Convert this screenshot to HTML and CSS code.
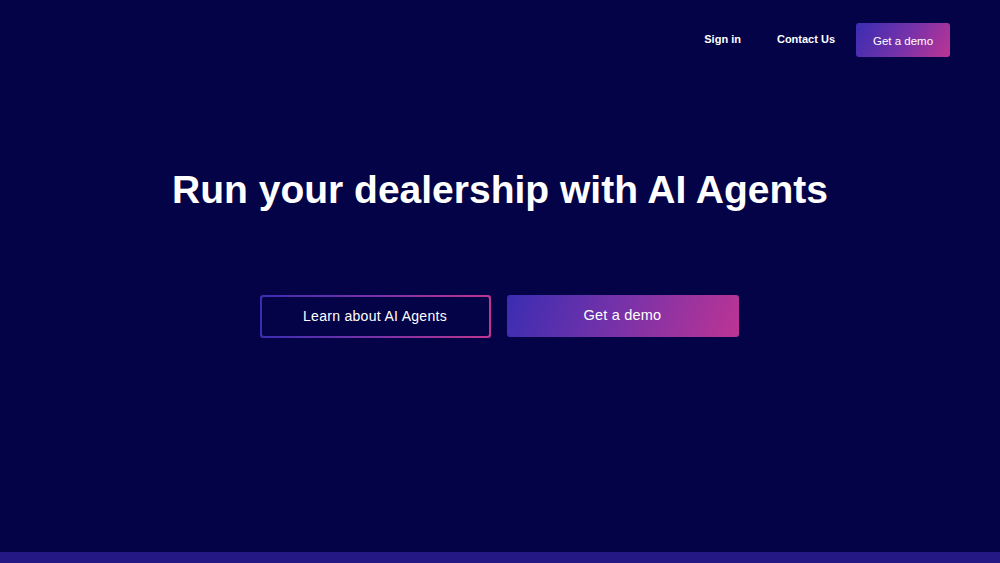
FILE: index.html
```html
<!DOCTYPE html>
<html lang="en">
<head>
<meta charset="utf-8">
<title>Run your dealership with AI Agents</title>
<link rel="stylesheet" href="styles.css">
</head>
<body>
<div class="page">
  <header class="nav">
    <a class="nav-link" href="#">Sign in</a>
    <a class="nav-link contact" href="#">Contact Us</a>
    <a class="nav-btn" href="#">Get a demo</a>
  </header>
  <main class="hero">
    <h1 class="title">Run your dealership with AI Agents</h1>
    <div class="actions">
      <a class="btn btn-outline" href="#"><span>Learn about AI Agents</span></a>
      <a class="btn btn-fill" href="#"><span>Get a demo</span></a>
    </div>
  </main>
  <div class="bottom-bar"></div>
</div>
</body>
</html>
```

FILE: styles.css
```css
* { box-sizing: border-box; }
html, body { margin: 0; padding: 0; }
body {
  background: #050347;
  font-family: "Liberation Sans", Arial, sans-serif;
  color: #fff;
}
a { color: inherit; text-decoration: none; }
.page {
  height: 100vh;
  display: flex;
  flex-direction: column;
}
.nav {
  display: flex;
  justify-content: flex-end;
  align-items: center;
  padding: 23px 50px 23px 0;
}
.nav-link {
  font-size: 11px;
  font-weight: bold;
  line-height: 34px;
  position: relative;
  top: -1px;
}
.nav-link.contact { margin-left: 36px; margin-right: 21px; }
.nav-btn {
  width: 94px;
  height: 34px;
  display: flex;
  align-items: center;
  justify-content: center;
  font-size: 11.5px;
  padding-top: 1px;
  border-radius: 3px;
  background: linear-gradient(120deg, #3a2db2 0%, #7a32a8 55%, #bd3494 100%);
}
.hero {
  flex: 1;
  display: flex;
  flex-direction: column;
  align-items: center;
}
.title {
  margin: 87px 0 0;
  font-size: 39px;
  line-height: 46px;
  font-weight: bold;
}
.actions {
  display: flex;
  gap: 16px;
  margin-top: 82px;
  position: relative;
  left: -1px;
}
.btn {
  width: 232px;
  height: 43px;
  border-radius: 3px;
  display: flex;
  align-items: center;
  justify-content: center;
  font-size: 14px;
  letter-spacing: 0.3px;
}
.btn span { position: relative; top: -1px; }
.btn-outline {
  width: 231px;
  padding: 2px;
  background: linear-gradient(90deg, #3a2db2 0%, #7a32a8 50%, #c0368f 100%);
}
.btn-outline span {
  flex: 1;
  align-self: stretch;
  display: flex;
  align-items: center;
  justify-content: center;
  background: #050347;
  border-radius: 2px;
  top: 0;
  padding-bottom: 2px;
}
.btn-fill {
  height: 42px;
  font-size: 14.5px;
  letter-spacing: 0.2px;
  background: linear-gradient(110deg, #3a2db2 0%, #7a32a8 50%, #bd3494 100%);
}
.bottom-bar {
  height: 11px;
  background: #241884;
}
```
